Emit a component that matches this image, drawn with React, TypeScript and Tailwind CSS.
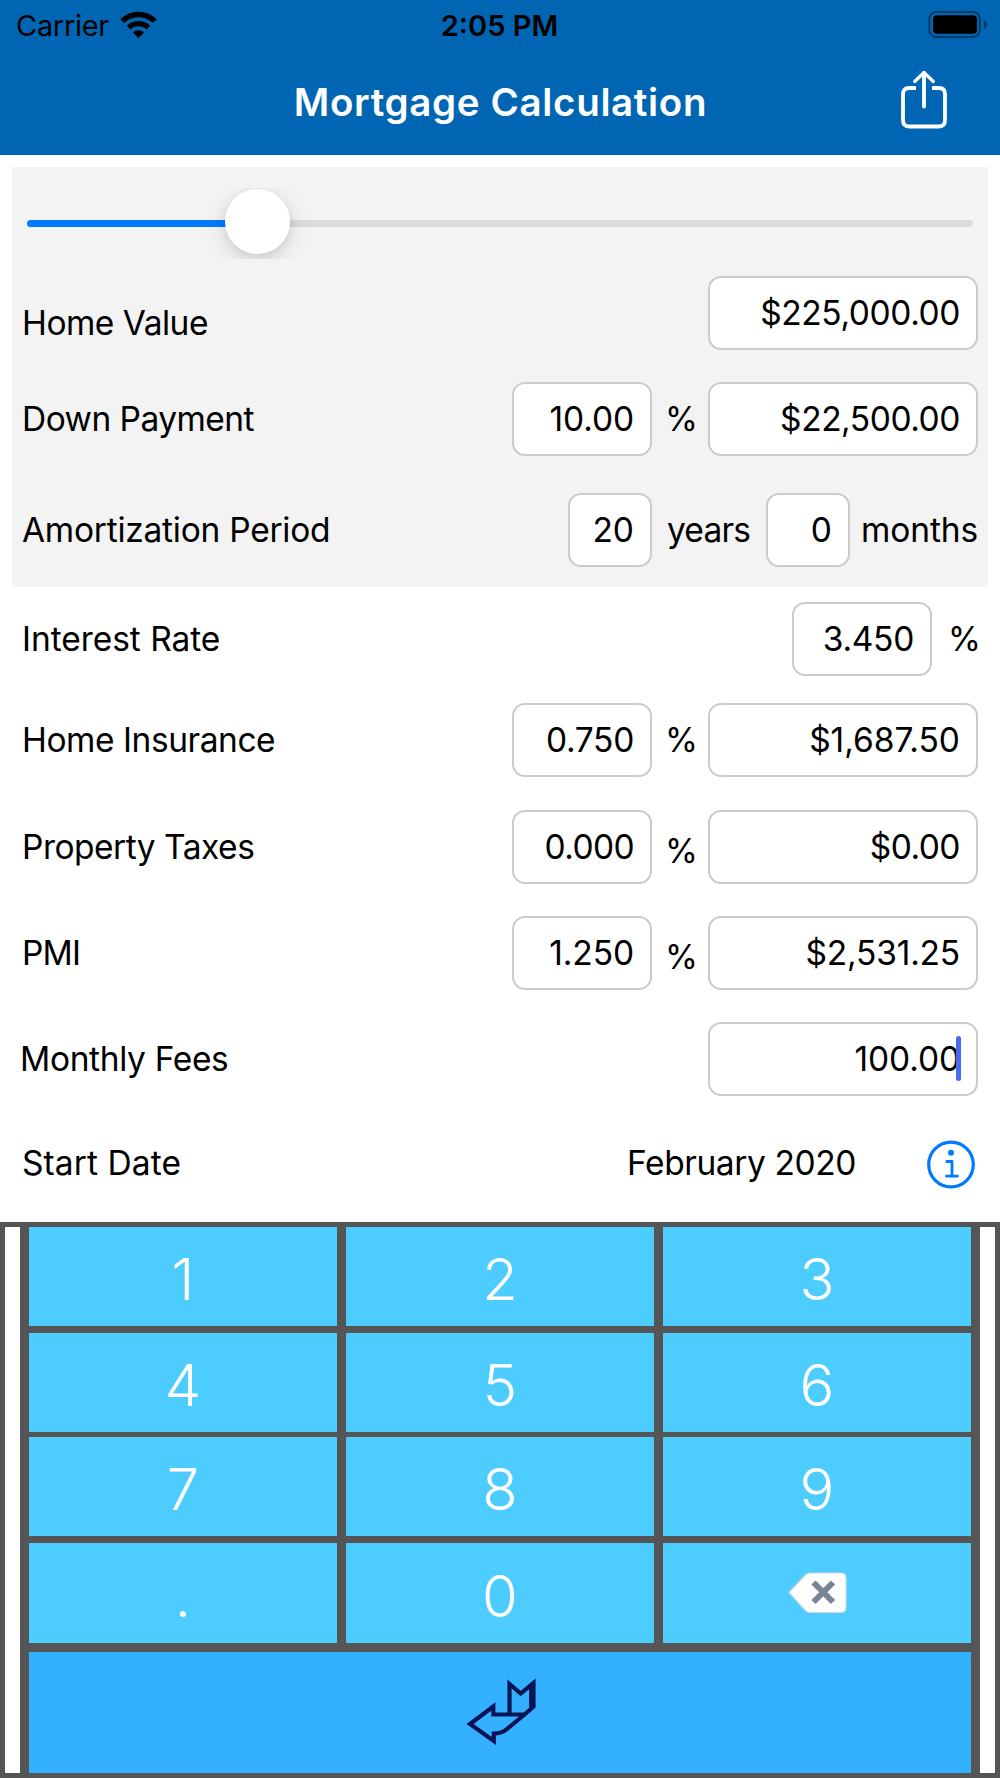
import type { ReactNode } from 'react';
import clsx from 'clsx';

const digits = [
  ['1', '2', '3'],
  ['4', '5', '6'],
  ['7', '8', '9'],
];

function WifiIcon() {
  return (
    <svg width="37" height="28" viewBox="0 0 37 28" fill="none" stroke="#000">
      <path d="M2.2 10.1C11.5 1.2 25.5 1.2 34.8 10.1" strokeWidth="5.4" />
      <path d="M8.6 16.6C14.2 11.4 22.8 11.4 28.4 16.6" strokeWidth="5.2" />
      <path d="M12.9 21.4C16.1 18.5 20.9 18.5 24.1 21.4L18.5 27Z" fill="#000" stroke="none" />
    </svg>
  );
}

function BatteryIcon() {
  return (
    <svg width="60" height="28" viewBox="0 0 60 28">
      <rect x="2.3" y="1" width="50.6" height="25" rx="7" fill="none" stroke="#000" strokeOpacity="0.42" strokeWidth="2" />
      <rect x="6" y="4.2" width="44" height="18.5" rx="4" fill="#000" />
      <path d="M56.8 9C60.8 10.5 60.8 16.9 56.8 18.4Z" fill="#000" fillOpacity="0.45" />
    </svg>
  );
}

function ShareIcon() {
  return (
    <svg width="46" height="60" viewBox="0 0 46 60" fill="none" stroke="#fff" strokeWidth="3.8">
      <path d="M15 18H8Q2 18 2 24V50Q2 56.5 8 56.5H38Q44 56.5 44 50V24Q44 18 38 18H31" />
      <path d="M23 36.5V3" strokeLinecap="round" />
      <path d="M13.7 11.5L23 2.5L32.3 11.5" strokeLinecap="round" strokeLinejoin="round" strokeWidth="3.2" />
    </svg>
  );
}

function InfoIcon() {
  return (
    <svg width="48" height="49" viewBox="0 0 48 49" fill="none" stroke="#007aff">
      <circle cx="24" cy="24.5" r="22.3" strokeWidth="3.2" />
      <circle cx="24" cy="12.8" r="3" fill="#007aff" stroke="none" />
      <path d="M19.8 21.5H25V36M19.5 36.2H30.5" strokeWidth="2.8" strokeLinecap="round" strokeLinejoin="round" />
    </svg>
  );
}

function BackspaceIcon() {
  return (
    <svg width="60" height="42" viewBox="0 0 60 42">
      <path d="M2 20.5L18.5 3Q20.5 1 23 1H53.5Q59 1 59 6V35.5Q59 40.5 53.5 40.5H23Q20.5 40.5 18.5 38.5Z" fill="#fff" stroke="#cfdbe2" strokeWidth="1.2" />
      <path d="M26.5 10.5L46 30M46 10.5L26.5 30" stroke="#7b8496" strokeWidth="6" />
    </svg>
  );
}

function EnterIcon() {
  return (
    <svg width="72" height="70" viewBox="0 0 72 70" fill="none" stroke="#081456" strokeWidth="4.2">
      <path d="M45.5 36V6L56.7 15.5L69.5 5V28.5L60 37L43 51Q38 55.5 29.8 55.5V63L6 46L29.3 28.5V36.5H60" />
      <path d="M67.6 7V29" strokeWidth="5" />
    </svg>
  );
}

type RowProps = { label: string; className?: string; labelClass?: string; children: ReactNode };

function Row({ label, className, labelClass, children }: RowProps) {
  return (
    <div className={clsx('flex h-[74px] items-center', className)}>
      <span className={clsx('flex-1 whitespace-nowrap', labelClass)}>{label}</span>
      {children}
    </div>
  );
}

function Field({ value, className, active }: { value: string; className: string; active?: boolean }) {
  return (
    <div className={clsx('relative flex h-[74px] items-center justify-end rounded-[13px] border-2 border-[#cbcbcb] bg-white pr-[16px] pt-[2px]', className)}>
      {value}
      {active && <span className="absolute right-[15px] top-[12px] h-[45px] w-[5px] rounded-full bg-[#476af2]" />}
    </div>
  );
}

function Percent({ className }: { className: string }) {
  return <span className={clsx('ml-[13px] w-[43px]', className)}>%</span>;
}

function Key({ children, className }: { children: ReactNode; className?: string }) {
  return (
    <button className={clsx('flex items-center justify-center text-[58px] font-light leading-none text-white', className)}>
      {children}
    </button>
  );
}

export default function App() {
  return (
    <div className="flex h-[1778px] w-[1000px] flex-col overflow-hidden bg-white font-['Inter',sans-serif] text-[33.5px] leading-none text-black">
      <header className="flex h-[155px] flex-col bg-[#0066b3]">
        <div className="grid h-[50px] grid-cols-3 items-center pl-[16px] pr-[13px] text-[29px]">
          <div className="flex items-center gap-[11px]">
            <span className="tracking-[-0.3px]">Carrier</span>
            <WifiIcon />
          </div>
          <span className="pr-[4px] text-center font-semibold">2:05 PM</span>
          <div className="flex justify-end">
            <BatteryIcon />
          </div>
        </div>
        <div className="grid h-[105px] grid-cols-[1fr_auto_1fr] items-center pr-[53px]">
          <span />
          <h1 className="pb-[1px] pl-[54px] text-[38.5px] font-semibold tracking-[0.65px] text-white">Mortgage Calculation</h1>
          <div className="flex justify-end pb-[5px]">
            <ShareIcon />
          </div>
        </div>
      </header>

      <section className="mx-[12px] mt-[12px] h-[420px] bg-[#f3f3f3] px-[10px] pt-[21px]">
        <div className="relative -mx-[10px] h-[71px] overflow-hidden px-[15px] pt-[32px]">
          <div className="h-[7px] rounded-full bg-[#dbdbdd]">
            <div className="h-[7px] w-[230px] rounded-full bg-[#007aff]" />
          </div>
          <div className="absolute left-[213px] top-[1px] size-[65px] rounded-full bg-white shadow-[0_6px_24px_rgba(0,0,0,0.13),0_3px_8px_rgba(0,0,0,0.08)]" />
        </div>
        <Row label="Home Value" className="mt-[17px]" labelClass="pt-[21px] tracking-[-0.5px]">
          <Field value="$225,000.00" className="w-[270px] tracking-[-0.4px]" />
        </Row>
        <Row label="Down Payment" className="mt-[32px]" labelClass="pt-[2px] tracking-[-0.55px]">
          <Field value="10.00" className="w-[140px] tracking-[-0.1px]" />
          <Percent className="pt-[2px]" />
          <Field value="$22,500.00" className="w-[270px] tracking-[-0.45px]" />
        </Row>
        <Row label="Amortization Period" className="mt-[37px]" labelClass="pt-[2px] tracking-[-0.25px]">
          <Field value="20" className="w-[84px]" />
          <span className="ml-[15px] w-[99px] pt-[2px] tracking-[-0.8px]">years</span>
          <Field value="0" className="w-[84px]" />
          <span className="ml-[11px] w-[117px] pt-[2px] tracking-[-0.1px]">months</span>
        </Row>
      </section>

      <section className="flex flex-col px-[22px]">
        <Row label="Interest Rate" className="mt-[15px]" labelClass="pt-[2px] tracking-[-0.05px]">
          <Field value="3.450" className="w-[140px] tracking-[-0.3px]" />
          <span className="-mr-[12px] ml-[16px] w-[42px] pt-[2px]">%</span>
        </Row>
        <Row label="Home Insurance" className="mt-[27px]" labelClass="pt-[2px] tracking-[-0.45px]">
          <Field value="0.750" className="w-[140px] tracking-[-0.3px]" />
          <Percent className="pt-[2px]" />
          <Field value="$1,687.50" className="w-[270px]" />
        </Row>
        <Row label="Property Taxes" className="mt-[33px]" labelClass="pt-[2px] tracking-[-0.5px]">
          <Field value="0.000" className="w-[140px] tracking-[-0.6px]" />
          <Percent className="pt-[10px]" />
          <Field value="$0.00" className="w-[270px] tracking-[-0.5px]" />
        </Row>
        <Row label="PMI" className="mt-[32px]" labelClass="pt-[2px] tracking-[-0.8px]">
          <Field value="1.250" className="w-[140px] tracking-[-0.1px]" />
          <Percent className="pt-[10px]" />
          <Field value="$2,531.25" className="w-[270px] tracking-[-0.2px]" />
        </Row>
        <Row label="Monthly Fees" className="mt-[32px]" labelClass="-ml-[2px] pt-[2px] tracking-[-0.35px]">
          <Field value="100.00" className="w-[270px] tracking-[-0.1px]" active />
        </Row>
        <Row label="Start Date" className="mt-[31px]" labelClass="tracking-[0.1px]">
          <span className="mr-[71px] tracking-[-0.4px]">February 2020</span>
          <span className="mr-[3px]">
            <InfoIcon />
          </span>
        </Row>
      </section>

      <section className="mt-[21px] flex h-[556px] bg-[#555555] py-[5px]">
        <div className="ml-[5px] w-[15px] bg-white" />
        <div className="mx-[9px] flex flex-1 flex-col">
          {digits.map((row, i) => (
            <div key={i} className={clsx('grid grid-cols-3 gap-x-[9px]', i === 1 ? 'mb-[5px]' : 'mb-[7px]')}>
              {row.map(digit => (
                <Key key={digit} className="h-[99px] bg-[#4dccff] pt-[5px]">
                  {digit}
                </Key>
              ))}
            </div>
          ))}
          <div className="grid grid-cols-3 gap-x-[9px]">
            <Key className="h-[100px] bg-[#4dccff] pt-[5px]">.</Key>
            <Key className="h-[100px] bg-[#4dccff] pt-[5px]">0</Key>
            <Key className="h-[100px] bg-[#4dccff]">
              <BackspaceIcon />
            </Key>
          </div>
          <Key className="mt-[9px] flex-1 bg-[#33b0ff]">
            <EnterIcon />
          </Key>
        </div>
        <div className="mr-[5px] w-[15px] bg-white" />
      </section>
    </div>
  );
}
